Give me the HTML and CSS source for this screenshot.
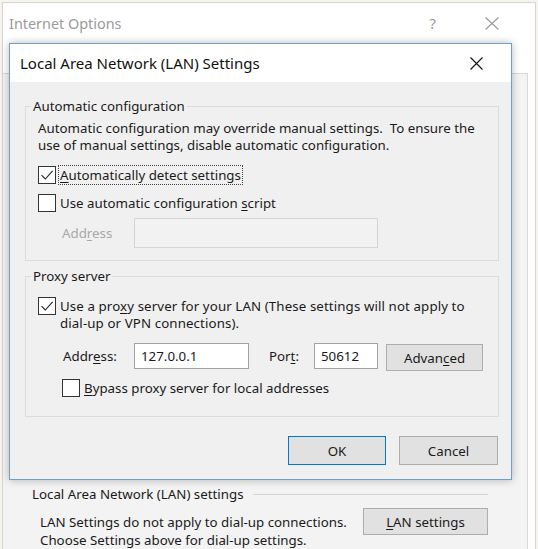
FILE: index.html
```html
<!DOCTYPE html>
<html lang="en">
<head>
<meta charset="utf-8">
<title>Local Area Network (LAN) Settings</title>
<link rel="stylesheet" href="styles.css">
</head>
<body>
<div class="window">
  <div class="win-title">
    <span class="win-name">Internet Options</span>
    <span class="win-help">?</span>
    <svg class="win-close" viewBox="0 0 14 13" aria-hidden="true"><path d="M0.5 0.5 L13.5 12.5 M13.5 0.5 L0.5 12.5" stroke="#9a9a9a" stroke-width="1.1" fill="none"/></svg>
  </div>
  <div class="win-body">
    <div class="tabpanel">
      <div class="lan-section">
        <div class="section-head"><span class="section-label">Local Area Network (LAN) settings</span><span class="rule"></span></div>
        <div class="section-row">
          <p class="section-text">LAN Settings do not apply to dial-up connections.<br>Choose Settings above for dial-up settings.</p>
          <button class="btn btn-lan"><u>L</u>AN settings</button>
        </div>
      </div>
    </div>
  </div>
</div>

<div class="dialog">
  <div class="dlg-title">
    <span class="dlg-name">Local Area Network (LAN) Settings</span>
    <svg class="dlg-close" viewBox="0 0 13 13" aria-hidden="true"><path d="M0.5 0.5 L12.5 12.5 M12.5 0.5 L0.5 12.5" stroke="#111" stroke-width="1.1" fill="none"/></svg>
  </div>
  <div class="dlg-body">
    <fieldset class="group group-auto">
      <legend>Automatic configuration</legend>
      <p class="note">Automatic configuration may override manual settings.&nbsp; To ensure the<br>use of manual settings, disable automatic configuration.</p>
      <div class="check-row cb-detect">
        <span class="box"><svg viewBox="0 0 16 16" aria-hidden="true"><path d="M2.5 8.2 L6.3 12 L13.6 3.8" stroke="#222" stroke-width="1.1" fill="none"/></svg></span>
        <span class="label focus"><u>A</u>utomatically detect settings</span>
      </div>
      <div class="check-row cb-script">
        <span class="box"></span>
        <span class="label">Use automatic configuration <u>s</u>cript</span>
      </div>
      <div class="field-row disabled">
        <span class="field-label dis-label">Add<u>r</u>ess</span>
        <span class="input input-disabled"></span>
      </div>
    </fieldset>

    <fieldset class="group group-proxy">
      <legend>Proxy server</legend>
      <div class="check-row multi">
        <span class="box"><svg viewBox="0 0 16 16" aria-hidden="true"><path d="M2.5 8.2 L6.3 12 L13.6 3.8" stroke="#222" stroke-width="1.1" fill="none"/></svg></span>
        <span class="label">Use a pro<u>x</u>y server for your LAN (These settings will not apply to<br>dial-up or VPN connections).</span>
      </div>
      <div class="addr-row">
        <span class="field-label addr-label">Addr<u>e</u>ss:</span>
        <span class="input input-addr">127.0.0.1</span>
        <span class="field-label port-label">Por<u>t</u>:</span>
        <span class="input input-port">50612</span>
        <button class="btn btn-adv">Advan<u>c</u>ed</button>
      </div>
      <div class="check-row bypass">
        <span class="box"></span>
        <span class="label"><u>B</u>ypass proxy server for local addresses</span>
      </div>
    </fieldset>

    <div class="dlg-buttons">
      <button class="btn btn-ok">OK</button>
      <button class="btn btn-cancel">Cancel</button>
    </div>
  </div>
</div>
</body>
</html>
```
FILE: styles.css
```css
* { box-sizing: border-box; }
html, body { margin: 0; padding: 0; }
body {
  width: 538px;
  height: 549px;
  overflow: hidden;
  position: relative;
  background: #f7f4ee;
  font-family: "Noto Sans", "Open Sans", sans-serif;
  font-size: 13.3px;
  color: #1a1a1a;
}
u { text-decoration: underline; text-underline-offset: 2px; text-decoration-thickness: 1px; }

/* background window */
.window {
  margin: 2px 0 0 2px;
  width: 534px;
  height: 547px;
  border: 1px solid #d4d4d4;
  border-bottom: none;
  background: #fff;
  display: flex;
  flex-direction: column;
  overflow: hidden;
}
.win-title {
  height: 40px;
  flex: none;
  display: flex;
  align-items: center;
  padding-left: 6px;
  color: #9a9a9a;
  font-size: 14.4px;
}
.win-name { flex: 1; }
.win-help { font-size: 15px; margin-right: 49px; }
.win-close { width: 14px; height: 13px; margin-right: 36px; }
.win-body { flex: 1; min-height: 0; background: #fff; display: flex; flex-direction: column; }
.tabpanel {
  flex: 1;
  min-height: 0;
  overflow: hidden;
  margin: 30px 7px 0 0;
  border-top: 1px solid #d9d9d9;
  border-right: 1px solid #d9d9d9;
  background: #f3f3f3;
  padding-top: 411px;
}
.section-head { display: flex; align-items: center; height: 18px; line-height: 18px; padding-left: 29px; }
.rule { flex: 1; height: 1px; background: #d5d5d5; margin: 1px 39px 0 9px; }
.section-row { display: flex; align-items: flex-start; margin-top: 10px; padding-left: 37px; }
.section-text { margin: 0; line-height: 18px; flex: 1; }
.btn-lan { width: 125px; height: 27px; margin: -5px 39px 0 0; }

/* buttons */
.btn {
  font: inherit;
  color: #1a1a1a;
  background: #e1e1e1;
  border: 1px solid #adadad;
  padding: 0;
  display: flex;
  align-items: center;
  justify-content: center;
  line-height: 18px;
}

/* dialog */
.dialog {
  position: absolute;
  left: 9px;
  top: 43px;
  width: 503px;
  height: 437px;
  border: 1px solid #6f9fcc;
  background: #f0f0f0;
  box-shadow: 0 0 8px rgba(0, 0, 0, 0.28);
  display: flex;
  flex-direction: column;
}
.dlg-title {
  height: 38px;
  flex: none;
  background: #fff;
  display: flex;
  align-items: center;
  padding-left: 10px;
  font-size: 15px;
  color: #111;
}
.dlg-name { flex: 1; }
.dlg-close { width: 13px; height: 13px; margin-right: 28px; margin-top: 1px; }
.dlg-body { flex: 1; padding-top: 15px; }

.group {
  margin: 0 12px 0 15px;
  border: 1px solid #dcdcdc;
  padding: 0 12px;
  min-width: 0;
}
.group legend {
  padding: 0 2px;
  margin-left: -7px;
  line-height: 18px;
}
.group-auto { padding-top: 5px; padding-bottom: 12px; }
.group-proxy { margin-top: 6px; padding-top: 13px; padding-bottom: 18px; }

.note { margin: 0; line-height: 17px; white-space: nowrap; }

.check-row { display: flex; align-items: center; height: 20px; }
.check-row.multi { align-items: flex-start; height: auto; }
.check-row.multi .label { line-height: 17px; letter-spacing: 0.1px; }
.check-row.multi .box { margin-top: -1px; }
.cb-detect { margin-top: 11px; }
.cb-script { margin-top: 8px; }
.bypass { margin-top: 7px; padding-left: 24px; }

.box {
  width: 18px;
  height: 18px;
  flex: none;
  border: 1px solid #333;
  background: #fff;
  margin-right: 3px;
  display: flex;
}
.box svg { width: 16px; height: 16px; }
.label { padding: 0 1px; line-height: 18px; white-space: nowrap; }
.focus { outline: 1px dotted #444; outline-offset: 0; }

.field-row { display: flex; align-items: center; margin-top: 5px; height: 30px; }
.field-label { white-space: nowrap; }
.dis-label { margin-left: 24px; width: 72px; color: #a8a8a8; }
.input {
  display: flex;
  align-items: center;
  background: #fff;
  border: 1px solid #a2a2a2;
  padding-left: 6px;
}
.input-disabled { width: 244px; height: 30px; background: #f2f2f2; border-color: #d5d5d5; }

.addr-row { display: flex; align-items: flex-start; margin-top: 11px; height: 28px; }
.addr-row .field-label { line-height: 26px; }
.addr-label { margin-left: 25px; width: 71px; }
.input-addr { width: 115px; height: 26px; }
.port-label { margin-left: 20px; width: 45px; }
.input-port { width: 64px; height: 26px; }
.btn-adv { width: 97px; height: 27px; margin: 1px 0 0 8px; }

.dlg-buttons { display: flex; justify-content: flex-end; gap: 13px; margin: 19px 13px 0 0; }
.btn-ok { width: 98px; height: 29px; border-color: #0078d7; }
.btn-cancel { width: 99px; height: 29px; }
```
